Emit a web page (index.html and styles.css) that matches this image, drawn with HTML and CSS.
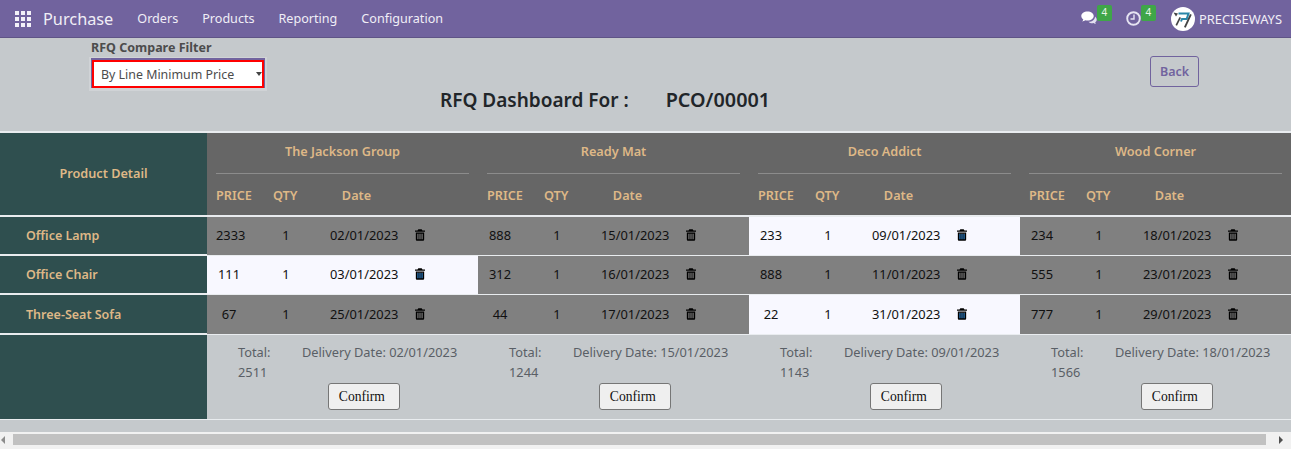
FILE: index.html
```html
<!DOCTYPE html>
<html lang="en">
<head>
  <meta charset="UTF-8" />
  <title>RFQ Dashboard</title>
  <link rel="stylesheet" href="styles.css">
</head>
<body>

<svg class="defs" width="0" height="0">
  <symbol id="trash" viewBox="0 0 12 14">
    <path d="M4 0h4l1 1.500h3V3H0V1.500h3zM1 4h10v8.500c0 .8-.7 1.500-1.500 1.500h-7C1.700 14 1 13.300 1 12.500zm1.800 1.500v6.700h1.400V5.500zm2.500 0v6.700h1.400V5.500zm2.500 0v6.700h1.400V5.500z" fill-rule="evenodd"/>
  </symbol>
</svg>

<nav class="navbar">
  <div class="grid-icon"><i></i><i></i><i></i><i></i><i></i><i></i><i></i><i></i><i></i></div>
  <span class="app-name">Purchase</span>
  <a>Orders</a>
  <a>Products</a>
  <a>Reporting</a>
  <a>Configuration</a>
  <div class="nav-right">
    <span class="nav-icon">
      <svg width="16" height="14" viewBox="0 0 16 14"><path d="M6.500 .5C3 .5 .3 2.500 .3 5c0 1.400.8 2.600 2 3.400-.2.800-.7 1.500-1.300 2.100 1.300-.1 2.500-.6 3.400-1.300.7.2 1.400.3 2.100.3 3.500 0 6.200-2 6.200-4.500S10 .5 6.500 .5z" fill="#fff"/><path d="M14 5.500c.2 3-3 5.400-6.500 5.300 1 1 2.400 1.500 3.700 1.500.5 0 1-.1 1.500-.2.600.5 1.400.9 2.300 1-.4-.5-.7-1.100-.8-1.700.9-.7 1.500-1.600 1.500-2.600 0-1.300-.7-2.400-1.700-3.300z" fill="#e3e0f0"/></svg>
      <b class="badge">4</b>
    </span>
    <span class="nav-icon">
      <svg width="15" height="15" viewBox="0 0 15 15"><circle cx="7.500" cy="7.500" r="6.300" fill="none" stroke="#e6e4f2" stroke-width="1.900"/><path d="M8 3.500v4.500H4.500" fill="none" stroke="#e6e4f2" stroke-width="1.400"/></svg>
      <b class="badge">4</b>
    </span>
    <svg class="logo" width="24" height="24" viewBox="0 0 24 24">
      <circle cx="12" cy="12" r="12" fill="#fff"/>
      <path d="M2.500 5.500l4.500 1-2 3zM4.500 18l4-8 1.500.8-4 8z" fill="#444"/>
      <path d="M7.500 6.500h10l-1.800 5.500H11l-1 2.500" fill="none" stroke="#2a86a8" stroke-width="2"/>
      <path d="M13 20l6-13 1.700.7-6 13z" fill="#444"/>
    </svg>
    <span class="user-name">PRECISEWAYS</span>
  </div>
</nav>

<section class="top-area">
  <div class="top-row">
    <div class="filter">
      <label>RFQ Compare Filter</label>
      <div class="select-wrap">
        <select>
          <option>By Line Minimum Price</option>
        </select>
      </div>
    </div>
    <button class="back-btn">Back</button>
  </div>
  <h2 class="title"><span>RFQ Dashboard For :</span><span class="order-no">PCO/00001</span></h2>
</section>

<div class="board">
  <div class="side head-side">Product Detail</div>
  <div class="vendor-head">
    <div class="vendor-name">The Jackson Group</div>
    <div class="cols"><span>PRICE</span><span>QTY</span><span>Date</span></div>
  </div>
  <div class="vendor-head">
    <div class="vendor-name">Ready Mat</div>
    <div class="cols"><span>PRICE</span><span>QTY</span><span>Date</span></div>
  </div>
  <div class="vendor-head">
    <div class="vendor-name">Deco Addict</div>
    <div class="cols"><span>PRICE</span><span>QTY</span><span>Date</span></div>
  </div>
  <div class="vendor-head">
    <div class="vendor-name">Wood Corner</div>
    <div class="cols"><span>PRICE</span><span>QTY</span><span>Date</span></div>
  </div>

  <div class="side product">Office Lamp</div>
  <div class="line"><span>2333</span><span>1</span><span>02/01/2023</span><svg class="del"><use href="#trash"/></svg></div>
  <div class="line"><span>888</span><span>1</span><span>15/01/2023</span><svg class="del"><use href="#trash"/></svg></div>
  <div class="line best"><span>233</span><span>1</span><span>09/01/2023</span><svg class="del"><use href="#trash"/></svg></div>
  <div class="line"><span>234</span><span>1</span><span>18/01/2023</span><svg class="del"><use href="#trash"/></svg></div>

  <div class="side product">Office Chair</div>
  <div class="line best"><span>111</span><span>1</span><span>03/01/2023</span><svg class="del"><use href="#trash"/></svg></div>
  <div class="line"><span>312</span><span>1</span><span>16/01/2023</span><svg class="del"><use href="#trash"/></svg></div>
  <div class="line"><span>888</span><span>1</span><span>11/01/2023</span><svg class="del"><use href="#trash"/></svg></div>
  <div class="line"><span>555</span><span>1</span><span>23/01/2023</span><svg class="del"><use href="#trash"/></svg></div>

  <div class="side product">Three-Seat Sofa</div>
  <div class="line"><span>67</span><span>1</span><span>25/01/2023</span><svg class="del"><use href="#trash"/></svg></div>
  <div class="line"><span>44</span><span>1</span><span>17/01/2023</span><svg class="del"><use href="#trash"/></svg></div>
  <div class="line best"><span>22</span><span>1</span><span>31/01/2023</span><svg class="del"><use href="#trash"/></svg></div>
  <div class="line"><span>777</span><span>1</span><span>29/01/2023</span><svg class="del"><use href="#trash"/></svg></div>

  <div class="side"></div>
  <div class="summary">
    <div class="total">Total:<br>2511</div>
    <div class="delivery">Delivery Date: 02/01/2023<button>Confirm</button></div>
  </div>
  <div class="summary">
    <div class="total">Total:<br>1244</div>
    <div class="delivery">Delivery Date: 15/01/2023<button>Confirm</button></div>
  </div>
  <div class="summary">
    <div class="total">Total:<br>1143</div>
    <div class="delivery">Delivery Date: 09/01/2023<button>Confirm</button></div>
  </div>
  <div class="summary">
    <div class="total">Total:<br>1566</div>
    <div class="delivery">Delivery Date: 18/01/2023<button>Confirm</button></div>
  </div>
</div>

<div class="scrollbar">
  <i class="arrow-left"></i>
  <div class="thumb"></div>
  <i class="arrow-right"></i>
</div>

</body>
</html>
```

FILE: styles.css
```css
html, body {
  margin: 0;
  height: 449px;
  overflow: hidden;
}

body {
  font-family: "Noto Sans", sans-serif;
  font-size: 13px;
  background: #c5c9cc;
  color: #4c4c4c;
}

.defs {
  display: block;
  height: 0;
}

/* navbar */
.navbar {
  display: flex;
  align-items: center;
  height: 38px;
  box-sizing: border-box;
  padding-left: 15px;
  background: #71639e;
  border-bottom: 1px solid #5f5486;
  color: #f0eef6;
}

.grid-icon {
  display: grid;
  grid-template-columns: repeat(3, 4px);
  gap: 2px;
  margin-right: 12px;
}

.grid-icon i {
  height: 4px;
  background: #f3f1f8;
}

.app-name {
  font-size: 16.3px;
  margin-right: 24px;
}

.navbar a {
  margin-right: 24px;
  font-size: 12.6px;
}

.nav-right {
  display: flex;
  align-items: center;
  margin-left: auto;
}

.nav-icon {
  display: flex;
  align-items: flex-start;
  height: 37px;
  margin-right: 14px;
}

.nav-icon + .nav-icon {
  margin-right: 15px;
}

.nav-icon svg {
  margin-top: 11px;
}

.badge {
  width: 15px;
  height: 16px;
  margin-top: 5px;
  border-radius: 2px;
  background: #3fa648;
  color: #e8f5e8;
  font-size: 10px;
  font-weight: 400;
  line-height: 15px;
  text-align: center;
}

.logo {
  margin-right: 4px;
}

.user-name {
  font-size: 12.900px;
  margin-right: 9px;
}

/* top */
.top-area {
  height: 93px;
  box-sizing: border-box;
  padding-top: 2px;
}

.top-row {
  display: flex;
  justify-content: space-between;
  padding: 0 92px 0 91px;
}

.filter label {
  display: block;
  font-weight: 700;
  font-size: 12.5px;
  line-height: 15px;
  margin-bottom: 5px;
}

.select-wrap {
  position: relative;
  width: 172px;
  height: 28px;
  margin-left: 1px;
  box-shadow: 0 -1px 0 1px #71639e, 0 0 0 3px rgba(255, 255, 255, 0.2);
}

.select-wrap::after {
  content: "";
  position: absolute;
  right: 2px;
  top: 12px;
  border: 3px solid transparent;
  border-top: 4px solid #444;
  border-bottom: 0;
}

.select-wrap select {
  display: block;
  width: 100%;
  height: 100%;
  box-sizing: border-box;
  appearance: none;
  border: 2px solid #f00;
  border-radius: 0;
  outline: none;
  background: #fff;
  padding: 0 0 0 7px;
  font-family: inherit;
  font-size: 12.4px;
  color: #4c4c4c;
}

.back-btn {
  width: 49px;
  height: 31px;
  margin-top: 16px;
  padding: 0;
  background: transparent;
  border: 1px solid #71639e;
  border-radius: 3px;
  color: #71639e;
  font-family: inherit;
  font-size: 12.5px;
  font-weight: 600;
}

.title {
  display: flex;
  gap: 37px;
  margin: -1px 0 0 440px;
  font-size: 19px;
  font-weight: 600;
  line-height: 26px;
  color: #212529;
}

.order-no {
  font-size: 19.8px;
}

/* board */
.board {
  display: grid;
  grid-template-columns: 207px repeat(4, 271px);
  grid-template-rows: 83px 38px 38px 39px 84px;
  row-gap: 1px;
  padding: 2px 0 1px;
  width: 1291px;
  background: #e9ecef;
}

.side {
  display: flex;
  align-items: center;
  background: #2f4f4f;
  color: #deb887;
  font-weight: 600;
  font-size: 12.5px;
}

.head-side {
  box-sizing: border-box;
  justify-content: center;
  padding-bottom: 2px;
  font-size: 12.7px;
  border-bottom: 1px solid #e9ecef;
}

.product {
  box-sizing: border-box;
  padding-left: 26px;
  border-bottom: 1px solid #e9ecef;
}

.vendor-head {
  box-sizing: border-box;
  background: #666;
  color: #deb887;
  font-weight: 600;
  font-size: 12.7px;
  padding: 0 9px;
  border-bottom: 1px solid #e9ecef;
}

.vendor-name {
  height: 40px;
  line-height: 37px;
  width: 253px;
  border-bottom: 1px solid #8c8c8c;
  text-align: center;
}

.cols {
  display: grid;
  grid-template-columns: 57px 57px 53px;
  line-height: 42px;
}

.cols span:nth-child(3) {
  text-align: center;
}

.line {
  display: grid;
  grid-template-columns: 54px 32px 113px 10px;
  align-items: center;
  padding: 0 0 2px 9px;
  background: #808080;
  color: #111;
  font-size: 12.85px;
}

.line.best {
  background: #f8f8ff;
}

.line span:nth-child(1) {
  width: 26px;
  text-align: center;
}

.line span:nth-child(2) {
  text-align: center;
}

.line span:nth-child(3) {
  padding-left: 28px;
}

.del {
  width: 10px;
  height: 12px;
  fill: #000;
}

.line.best .del {
  background: linear-gradient(#2f7fc4, #2f7fc4) center 5px / 7px 6px no-repeat;
}

.summary {
  display: flex;
  background: #c5c9cc;
  padding: 8px 0 0 31px;
  line-height: 19.5px;
  font-size: 12.8px;
  color: #5a5f66;
}

.total {
  width: 64px;
}

.delivery {
  display: flex;
  flex-direction: column;
  align-items: flex-start;
  white-space: nowrap;
}

.delivery button {
  width: 72px;
  height: 27px;
  margin: 20px 0 0 26.4px;
  padding: 1px 5px 0 0;
  background: #efefef;
  border: 1px solid #767676;
  border-radius: 3px;
  font-family: "Liberation Serif", serif;
  font-size: 13.6px;
  color: #111;
}

/* scrollbar */
.scrollbar {
  display: flex;
  align-items: center;
  box-sizing: border-box;
  height: 17px;
  margin-top: 12px;
  padding-bottom: 2px;
  background: #f1f1f1;
}

.thumb {
  flex: 1;
  height: 11px;
  margin: 0 13px 0 8px;
  background: #c1c1c1;
}

.arrow-left,
.arrow-right {
  width: 0;
  height: 0;
  border: 4px solid transparent;
}

.arrow-left {
  margin-left: 1px;
  border-left: 0;
  border-right: 4px solid #8c8c8c;
}

.arrow-right {
  margin-right: 8px;
  border-right: 0;
  border-left: 4px solid #505050;
}
```
